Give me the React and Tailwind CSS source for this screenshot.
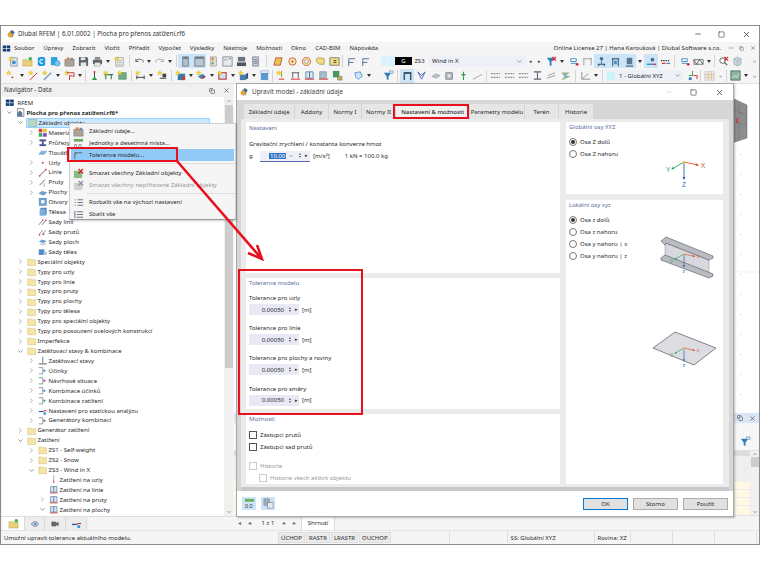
import { ChevronRight, ChevronDown, Minus, Square, X, Eye, Video, Copy } from 'lucide-react';

const star = <path d="M3 0.5l.8 1.7 1.8.2-1.3 1.2.4 1.8L3 4.5l-1.7.9.4-1.8L.4 2.4l1.8-.2z" fill="#f4d83a" stroke="#c9a21a" strokeWidth=".3" />;
const dot = (x, y, c = '#d8232a') => <circle cx={x} cy={y} r="1" fill={c} />;

const icons = {
  docstar: <><rect x="3" y="2" width="7" height="9" fill="#dfe7ee" stroke="#6b7a88" strokeWidth=".7" /><circle cx="6.5" cy="7" r="2" fill="#3d8fc4" />{star}</>,
  folderstar: <><path d="M1 4h4l1 1h5v6H1z" fill="#e8cf7c" stroke="#b99b45" strokeWidth=".5" /><circle cx="9" cy="3" r="2" fill="#4caf50" /></>,
  c: <><rect x="2" y="1" width="8" height="10" rx="2" fill="#1e9be0" /><path d="M7.5 4.5a2 2 0 1 0 0 3" stroke="#fff" fill="none" strokeWidth="1.1" /></>,
  cloud: <><rect x="1" y="1" width="7" height="9" rx="1" fill="#2ea3e3" /><circle cx="8" cy="8" r="3" fill="#7cc7ee" stroke="#2579ad" strokeWidth=".5" /></>,
  box: <><rect x="1" y="4" width="10" height="7" fill="#a9a39a" stroke="#6f6a63" strokeWidth=".5" /><rect x="3" y="1.5" width="3" height="3" fill="#d8823c" /><rect x="7" y="2" width="3" height="2.5" fill="#6f8fb0" /></>,
  save: <><path d="M1 1h8.5L11 2.5V11H1z" fill="#5f6468" /><rect x="3" y="1.5" width="5" height="3" fill="#e6e6e6" /><rect x="3" y="7" width="6" height="4" fill="#e6e6e6" /></>,
  print: <><rect x="3" y="1" width="6" height="3" fill="#8e9296" /><rect x="1" y="4" width="10" height="5" rx="1" fill="#5f6468" /><rect x="3" y="7" width="6" height="4" fill="#e9e9e9" stroke="#666" strokeWidth=".4" /></>,
  clip: <><rect x="2" y="2" width="8" height="9" fill="#eee" stroke="#777" strokeWidth=".6" /><path d="M3.5 5h5M3.5 7h5M3.5 9h5" stroke="#888" strokeWidth=".5" />{star}</>,
  undo: <path d="M2 6a4 3 0 0 1 8 1M2 3v3h3" fill="none" stroke="#666" strokeWidth="1" />,
  redo: <path d="M10 6a4 3 0 0 0-8 1M10 3v3H7" fill="none" stroke="#aaa" strokeWidth="1" />,
  panel: <><rect x="3" y="1" width="6" height="10" fill="#b7c0c8" stroke="#5a6570" strokeWidth=".8" /><rect x="3.5" y="1.5" width="5" height="1.5" fill="#5a6570" /></>,
  panel2: <><rect x="1" y="1" width="10" height="10" fill="#c0c8cf" stroke="#5a6570" strokeWidth=".8" /><rect x="1.5" y="1.5" width="9" height="1.5" fill="#5a6570" /></>,
  colors: <><rect x="3" y="1" width="6" height="10" fill="#ddd" stroke="#777" strokeWidth=".5" /><rect x="4" y="2" width="2" height="2" fill="#e0503c" /><rect x="4" y="4.5" width="2" height="2" fill="#e6c13c" /><rect x="4" y="7" width="2" height="2" fill="#47a05a" /></>,
  img: <><rect x="1" y="1" width="10" height="10" fill="#e7eaee" stroke="#5a6570" strokeWidth=".7" /><path d="M2 5l2-1.5L6 5M7 3h3" stroke="#556" strokeWidth=".6" fill="none" /></>,
  hbd: <><rect x="2" y="1" width="8" height="5" fill="#6a7480" /><rect x="1" y="7" width="10" height="4" fill="#4e5761" /></>,
  phone: <><rect x="3" y="1" width="6" height="10" fill="#c7d0d8" stroke="#5a6570" strokeWidth=".7" /><path d="M4 4h4M4 6h4M4 8h4" stroke="#445" strokeWidth=".6" /></>,
  para: <path d="M3 2h7L8 10H1z" fill="#e8c24a" stroke="#c0392b" strokeWidth=".8" />,
  search: <><circle cx="6" cy="6" r="4" fill="#f4e6a8" stroke="#d0503c" strokeWidth=".9" />{dot(6, 6)}</>,
  target: <><circle cx="6" cy="6" r="4.5" fill="#f2dc96" stroke="#c84a3a" strokeWidth=".8" /><circle cx="6" cy="6" r="2" fill="#fff" stroke="#777" strokeWidth=".6" /></>,
  bubble: <path d="M1.5 3.5Q2 1.5 6 2l4 1v6H5L1.5 6z" fill="#f3de7c" stroke="#7b6f3a" strokeWidth=".6" />,
  grid: <><rect x="1" y="2" width="10" height="8" fill="#f1dd83" stroke="#55534a" strokeWidth=".7" /><path d="M5 5h3M5 7h3" stroke="#333" strokeWidth="1" /></>,
  axis: <path d="M3 11V3h7M3 7h5" fill="none" stroke="#4a6c8c" strokeWidth="1" />,
  filterx: <><path d="M1 2h8L6 6v5L4 10V6z" fill="#2a7fc0" /><path d="M7 1l4 4M11 1L7 5" stroke="#d81e28" strokeWidth="1.3" /></>,
  filter: <><path d="M1 3h8L6 7v4L4 10V7z" fill="#2a7fc0" /><rect x="7" y="1" width="4" height="3" fill="#cfe2f2" stroke="#47739a" strokeWidth=".5" /></>,
  rig: <path d="M2 2v8M10 2v8M2 3h8" stroke="#999" strokeWidth="1" fill="none" />,
  loadA: <><circle cx="6" cy="3" r="2" fill="#4a6c8c" /><path d="M2 9h8M3 9v2M9 9v2" stroke="#263d52" strokeWidth="1" /><path d="M6 5v4" stroke="#2a7fc0" strokeWidth="1" /></>,
  loadB: <><path d="M2 3h8M3 3v8M9 3v8" stroke="#263d52" strokeWidth="1" /><rect x="4.5" y="5" width="3" height="4" fill="#4a8fc0" /></>,
  loadC: <><rect x="3" y="2" width="6" height="7" fill="#5b7a92" /><path d="M2 11h8" stroke="#263d52" strokeWidth="1" /></>,
  loadD: <><circle cx="7" cy="4" r="2" fill="#4a6c8c" /><path d="M1 9h7" stroke="#2a7fc0" strokeWidth="1.4" /><path d="M8 9h3" stroke="#d81e28" strokeWidth="1.4" /></>,
  loadE: <><path d="M1 5h10" stroke="#333" strokeWidth="1.2" strokeDasharray="1.5 1" /><path d="M2 8h4" stroke="#d81e28" strokeWidth="1.2" /><path d="M7 8h4" stroke="#2a7fc0" strokeWidth="1.2" /></>,
  net: <><path d="M3 3h6v3H3zM3 8h6" fill="#fff" stroke="#2a7fc0" strokeWidth=".9" /><circle cx="10" cy="9" r="1.5" fill="#d8232a" /></>,
  truss: <path d="M1 4h10v5H1zM1 4l3 5 3-5 4 5" fill="none" stroke="#333" strokeWidth=".7" />,
  magx: <><circle cx="5" cy="5" r="3" fill="#fff" stroke="#555" strokeWidth="1" /><path d="M7 7l3 3" stroke="#555" strokeWidth="1.2" /><path d="M7 1l4 4M11 1L7 5" stroke="#d81e28" strokeWidth="1.2" /></>,
  cube: <><path d="M2 3l4-2 4 2v6l-4 2-4-2z" fill="#c5d3df" stroke="#8fa2b2" strokeWidth=".6" /><path d="M6 5v6M2 3l4 2 4-2" stroke="#8fa2b2" strokeWidth=".5" fill="none" /></>,
  nodestar: <>{star}{dot(7, 8)}</>,
  linestar: <>{star}<path d="M2 11L10 3" stroke="#d8232a" strokeWidth="1" /></>,
  memberstar: <>{star}<path d="M2 11L10 3" stroke="#7aa0c4" strokeWidth="1.6" /></>,
  polystar: <>{star}<path d="M3 3h8v4L6 6v5" fill="none" stroke="#c83030" strokeWidth="1" /></>,
  sup1: <><path d="M6 2v6" stroke="#333" strokeWidth="1" /><path d="M3 11l3-4 3 4z" fill="#2e9e4a" />{dot(6, 2)}</>,
  sup2: <><path d="M1 5h10M3 5v5M9 5v5" stroke="#2e7a4a" strokeWidth="1.2" />{star}</>,
  sup3: <><rect x="2" y="3" width="8" height="7" fill="#6eae88" stroke="#3a7a58" strokeWidth=".6" />{star}</>,
  hinge: <><path d="M2 6v4M10 6v4M2 8h8" stroke="#333" strokeWidth="1" />{star}</>,
  hinge2: <><path d="M3 9h7" stroke="#333" strokeWidth="1" /><rect x="6" y="4" width="4" height="4" fill="#444" />{star}</>,
  surf: <><rect x="3" y="4" width="8" height="7" fill="#2c7fb8" /><rect x="7" y="7" width="4" height="4" fill="#c04040" />{star}</>,
  surf2: <><path d="M2 7l5-3 4 3-5 3z" fill="#3c87bd" /><circle cx="8" cy="8" r="1.4" fill="#d8232a" />{star}</>,
  frame: <><rect x="2" y="3" width="8" height="7" fill="#cfe3f3" stroke="#c02828" strokeWidth="1.1" />{star}</>,
  solidm: <><path d="M2 5h6v6H2z" fill="#497fb0" /><path d="M8 5l3-2v6l-3 2z" fill="#2c5a86" />{star}</>,
  book: <><rect x="2" y="3" width="8" height="8" fill="#5b9ad0" /><rect x="2" y="1" width="8" height="2.4" fill="#eef" stroke="#47739a" strokeWidth=".4" /></>,
  pin: <><path d="M6 1v7" stroke="#c4a31c" strokeWidth="1.2" /><path d="M3 10h6" stroke="#d8232a" strokeWidth="1" />{star}</>,
  load1: <><path d="M2 3h8M3 3v6M9 3v6" stroke="#333" strokeWidth=".8" /><path d="M1 10h10" stroke="#d8232a" strokeWidth="1" /></>,
  load2: <><path d="M2 2h8v7H2z" fill="#dbe8f4" stroke="#47739a" strokeWidth=".8" /><path d="M6 2v7" stroke="#47739a" /><path d="M1 10h10" stroke="#d8232a" strokeWidth="1" /></>,
  load3: <><rect x="2" y="2" width="7" height="7" fill="#a7bccd" stroke="#5e7688" strokeWidth=".6" /><path d="M1 10h10" stroke="#d8232a" strokeWidth="1" /></>,
  zs: <><rect x="1" y="1" width="7" height="7" fill="#4a9660" /><path d="M6 7h5v4H6z" fill="#c7b25a" stroke="#444" strokeWidth=".4" /></>,
  sketch: <path d="M2 3l6-1 2 5-4 3-3-2z" fill="#cfe3f7" stroke="#3f87c9" strokeWidth=".8" />,
  frameactive: <path d="M2.5 11V3h7v8M2.5 3.5h7" fill="none" stroke="#445566" strokeWidth="1.6" />,
  bowl: <path d="M2 2l4 8 4-8M2 2l4 4 4-4" fill="none" stroke="#4a63c8" strokeWidth="1" />,
  plate: <path d="M2 7l4-3 5 2-4 3z" fill="#bcc3ca" stroke="#7a848c" strokeWidth=".5" />,
  cubeg: <><rect x="2" y="3" width="7" height="7" fill="#b7bdc2" stroke="#5e666c" strokeWidth=".7" /><circle cx="5.5" cy="6.5" r="1.5" fill="#eee" /></>,
  arrows: <path d="M6 2v4l-2-1h4L6 6M6 11V7" stroke="#2e9e4a" strokeWidth="1.2" fill="none" />,
  thin: <path d="M1 10L11 5" stroke="#bbb" strokeWidth="1.2" />,
  dash: <path d="M1 4h10M1 8h10" stroke="#667" strokeWidth="1" strokeDasharray="2 1" />,
  ibeam: <path d="M2 2h8M2 10h8M6 2v8" stroke="#667" strokeWidth="1.2" />,
  slash: <path d="M1 9l9-3M2 6l8-3" stroke="#8a8f94" strokeWidth=".9" />,
  lightning: <path d="M2 3h8l-4 3 5 1-9 4 3-4z" fill="#6ab0e0" stroke="#d6b522" strokeWidth=".5" />,
  corner: <path d="M2 2v8h9M2 10l7-6" stroke="#8a8f94" strokeWidth="1" fill="none" />,
  tri: <><path d="M6 1v5H2" stroke="#2e9e4a" strokeWidth="1" fill="none" /><path d="M7 6h4v4" stroke="#d8232a" strokeWidth="1" fill="none" /><rect x="2" y="8" width="3" height="3" fill="#2a7fc0" /></>,
  table: <><rect x="1" y="2" width="10" height="9" fill="#eee" stroke="#aaa" strokeWidth=".5" /><path d="M1 5h10M1 8h10M4.5 2v9M8 2v9" stroke="#d6a86a" strokeWidth=".6" /></>,
  chart: <><rect x="1" y="1" width="10" height="10" fill="#8bb89a" stroke="#46606e" strokeWidth=".9" /><path d="M2 9l3-3 2 2 3-4" stroke="#fff" fill="none" strokeWidth=".7" /></>,
  mat: <><rect x="1" y="1" width="4.5" height="4.5" fill="#e04040" /><rect x="6.5" y="1" width="4.5" height="4.5" fill="#eac02e" /><rect x="1" y="6.5" width="4.5" height="4.5" fill="#39a85a" /><rect x="6.5" y="6.5" width="4.5" height="4.5" fill="#8044c0" /></>,
  section: <path d="M2 2h8v2H7v4h3v2H2V8h3V4H2z" fill="#2464b4" stroke="#d8232a" strokeWidth=".3" />,
  thick: <path d="M1 8l3-4h7L8 8z" fill="#7fb3e0" stroke="#5d8db8" strokeWidth=".5" />,
  node: <rect x="5" y="5" width="2" height="2" fill="#d8232a" />,
  line: <><path d="M2 10l8-8" stroke="#444" strokeWidth="1" />{dot(2, 10)}{dot(10, 2)}</>,
  member: <><path d="M2 9l7-7" stroke="#444" strokeWidth="1" /><text x="7" y="11" fontSize="6" fontFamily="Liberation Sans" fill="#444">I</text></>,
  surface: <path d="M1 7l4-3 6 2-4 3z" fill="#6f9fcc" stroke="#4a78a5" strokeWidth=".5" />,
  opening: <><rect x="1.5" y="1.5" width="9" height="9" fill="#6fa2d4" stroke="#446f9c" strokeWidth=".6" /><rect x="4" y="4" width="4" height="4" fill="#fff" /></>,
  solid: <><rect x="2" y="3" width="7" height="8" fill="#79aee0" /><path d="M2 3l2-2h7l-2 2zM9 3l2-2v8l-2 2z" fill="#4f8ac4" /></>,
  setline: <><path d="M1 10l5-6M5 10l5-6" stroke="#444" strokeWidth=".8" />{dot(6, 4)}{dot(10, 4)}</>,
  setmember: <><path d="M1 10l5-6M5 10l5-6" stroke="#555" strokeWidth=".8" />{dot(2, 10)}{dot(7, 9)}</>,
  setsurf: <><path d="M1 6l4-3 6 2-4 3z" fill="#6f9fcc" /><path d="M3 9h7" stroke="#999" /></>,
  setsolid: <><rect x="1" y="3" width="7" height="7" fill="#4f8ac4" /><rect x="7" y="6" width="4" height="4" fill="#a7c6e4" /></>,
  ls: <><path d="M6 1v8" stroke="#2d6bb3" strokeWidth="1" /><path d="M1 10h10" stroke="#333" strokeWidth="1" /></>,
  effect: <><path d="M1 2h5M1 10h5M6 2v8" stroke="#555" strokeWidth=".7" fill="none" /><path d="M7 4l3 2-3 2z" fill="#2a7fd8" /></>,
  design: <><path d="M1 2h5M1 10h5" stroke="#2e9e4a" strokeWidth=".9" fill="none" /><path d="M6 2v8" stroke="#555" strokeWidth=".7" /><path d="M7 4l3 2-3 2z" fill="#d020c0" /></>,
  combogreen: <><path d="M1 2h5M1 10h5M6 2v8" stroke="#555" strokeWidth=".7" fill="none" /><path d="M7 4l3 2-3 2z" fill="#1ea04a" /></>,
  static: <><path d="M1 7h6" stroke="#2a5f9e" strokeWidth="1.5" /><path d="M7 6h4" stroke="#d8232a" strokeWidth="1.2" /><rect x="7" y="8" width="3" height="3" fill="#3d8fd0" /></>,
  gen: <><path d="M1 2h5M1 10h5M6 2v8" stroke="#555" strokeWidth=".7" fill="none" /><path d="M7 4l3 2-3 2z" fill="#666" /></>,
  ln: <><path d="M6 1v7" stroke="#3d6ab0" strokeWidth="1" strokeDasharray="1.5 .7" /><path d="M6 7v3" stroke="#d8232a" strokeWidth="1.2" /></>,
  folder: <path d="M1 2.5h4l1 1h5v7.5H1z" fill="#f5e6a8" stroke="#cdb874" strokeWidth=".6" />,
  folderg: <rect x="1" y="2" width="10" height="9" fill="#b9d6c4" stroke="#86a896" strokeWidth=".6" />,
  project: <><rect x="2" y="1" width="8" height="10" fill="#fff" stroke="#445" strokeWidth=".7" /><path d="M1 7l4-4 3 3v4H2z" fill="#5b7c9a" /></>,
  flag: <><rect x="1" y="2" width="10" height="8" fill="#163a78" /><path d="M1 6h10M6 2v8" stroke="#fff" strokeWidth=".8" /></>,
  logo: <><path d="M2 6l5-5 3 3-2 6H4z" fill="#7a7f86" /><circle cx="5" cy="7" r="3" fill="#e7a63a" /><circle cx="8" cy="4" r="2" fill="#3e6ea8" /></>,
  units: <><rect x="1" y="1" width="10" height="3" fill="#6aae5a" /><text x="1" y="10.5" fontSize="6" fontFamily="Liberation Sans" fill="#333">0.0</text></>,
  tol: <path d="M2 10V3h8M4 3l-2 2" stroke="#555" strokeWidth=".9" fill="none" />,
  delx: <><rect x="1" y="3" width="9" height="8" fill="#86bf7c" /><path d="M6 1l5 5M11 1L6 6" stroke="#d81e28" strokeWidth="1.4" /></>,
  delg: <><rect x="1" y="3" width="9" height="8" fill="#ccd2cc" /><path d="M6 1l5 5M11 1L6 6" stroke="#8b9097" strokeWidth="1.4" /></>,
  expand: <path d="M2 3h1M5 3h6M2 6h1M5 6h6M2 9h1M5 9h6" stroke="#667" strokeWidth="1" />,
  collapse: <path d="M2 2v8M4 3h7M4 6h7M4 9h7" stroke="#667" strokeWidth="1" />,
  copy: <><rect x="1" y="1" width="6" height="7" fill="#9fb0bd" stroke="#667" strokeWidth=".5" /><rect x="5" y="5" width="6" height="6" fill="#e6e9ec" stroke="#667" strokeWidth=".5" /></>,
};

const Ico = ({ k, className = 'w-[11px] h-[11px]' }) => (
  <svg viewBox="0 0 12 12" className={`shrink-0 ${className}`}>{icons[k]}</svg>
);

const Slot = ({ k, active }) => (
  <div className={`w-[14px] h-[14px] flex items-center justify-center shrink-0 ${active ? 'bg-[#cce4f7]' : ''}`}>
    <Ico k={k} />
  </div>
);
const Caret = ({ w = 'w-[8px]' }) => (
  <div className={`${w} h-[14px] flex items-center justify-center shrink-0`}>
    <div className="border-x-[2px] border-t-[3px] border-x-transparent border-t-[#333]" />
  </div>
);
const Sep = ({ w = 'w-[7px]' }) => (
  <div className={`${w} h-[12px] flex justify-center shrink-0`}><div className="w-px h-full bg-[#d4d4d4]" /></div>
);
const More = () => <div className="w-[9px] text-center text-[6px] text-[#888] shrink-0">»</div>;

function Toolbar1() {
  return (
    <div className="h-[14px] flex items-center pl-[5px] bg-[#f5f5f5] shrink-0">
      {['docstar', 'folderstar', 'c', 'cloud', 'box', 'save', 'print'].map((k) => <Slot key={k} k={k} />)}
      <Caret />
      <Slot k="clip" />
      <Sep w="w-[6px]" />
      <Slot k="undo" /><Caret w="w-[6px]" /><Slot k="redo" /><Caret />
      <Sep w="w-[4px]" />
      <Slot k="panel" active /><Slot k="panel2" active />
      {['colors', 'img', 'hbd', 'phone'].map((k) => <Slot key={k} k={k} />)}
      <Sep w="w-[9px]" />
      {['para', 'search', 'target', 'bubble', 'grid'].map((k) => <Slot key={k} k={k} />)}
      <Sep w="w-[3px]" />
      <Slot k="axis" /><Slot k="axis" />
      <div className="w-[6px] h-[10px] ml-[9px] bg-[#d8f3fb]" />
      <div className="w-[6px] h-[10px] ml-px bg-[#d8f3fb]" />
      <div className="w-[17px] h-[8px] ml-[1px] bg-black text-white text-[6px] leading-[8px] text-center">G</div>
      <div className="w-[15px] text-center">ZS3</div>
      <div className="w-[97px] h-[11px] ml-[2px] bg-[#eef0f8] flex items-center justify-between px-[3px]">
        <span>Wind in X</span>
        <ChevronDown size={7} color="#666" />
      </div>
      <div className="w-[9px] text-center text-[5px]">◂</div>
      <div className="w-[9px] text-center text-[5px]">▸</div>
      <Slot k="filterx" /><Caret />
      <Slot k="net" /><Slot k="rig" />
      <Slot k="loadA" active /><Slot k="loadB" active /><Slot k="loadC" active />
      <Caret />
      <Slot k="loadD" active /><Slot k="loadE" />
      <Sep w="w-[5px]" />
      <Slot k="net" /><Slot k="truss" /><Caret />
      <Sep w="w-[3px]" />
      <Slot k="magx" /><Slot k="cube" />
      <div className="flex-1" />
      <More />
    </div>
  );
}

function Toolbar2() {
  return (
    <div className="h-[16px] flex items-center pl-[3px] bg-[#f5f5f5] border-b border-[#e0e0e0] shrink-0">
      <Slot k="nodestar" /><Caret />
      <Slot k="linestar" />
      <Slot k="memberstar" /><Caret />
      <Slot k="polystar" /><Caret />
      <Sep w="w-[3px]" />
      <Slot k="sup1" /><Slot k="sup2" /><Slot k="sup3" />
      <Sep w="w-[4px]" />
      <Slot k="hinge" /><Caret /><Slot k="hinge2" />
      <Sep w="w-[4px]" />
      <Slot k="surf" /><Caret w="w-[7px]" /><Slot k="surf2" /><Caret w="w-[7px]" /><Slot k="frame" /><Caret w="w-[7px]" /><Slot k="solidm" /><Caret w="w-[7px]" /><Slot k="book" />
      <Sep w="w-[3px]" />
      {['pin', 'load1', 'load2', 'load3', 'zs'].map((k) => <Slot key={k} k={k} />)}
      <div className="w-[7px]" />
      <Slot k="sketch" /><Caret />
      <div className="w-[8px]" />
      <Slot k="filter" />
      <Sep w="w-[5px]" />
      <Slot k="frameactive" active />
      <Slot k="bowl" /><Slot k="plate" /><Slot k="cubeg" /><Slot k="arrows" /><Slot k="thin" />
      <Sep w="w-[4px]" />
      <Slot k="dash" /><Slot k="dash" /><Slot k="dash" /><Slot k="ibeam" /><Slot k="slash" /><Slot k="lightning" />
      <Sep w="w-[6px]" />
      <Slot k="corner" /><Caret />
      <Sep w="w-[5px]" />
      <div className="w-[78px] h-[11px] bg-[#eef0f8] flex items-center px-[2px] gap-[4px]">
        <div className="w-[8px] h-[8px] bg-[#cdf3f7]" />
        <span className="flex-1">1 - Globální XYZ</span>
        <ChevronDown size={7} color="#666" />
      </div>
      <div className="w-[2px]" />
      <Slot k="tri" />
      <Sep w="w-[3px]" />
      <Slot k="table" />
      <More />
      <Sep w="w-[3px]" />
      <Slot k="chart" /><Caret />
      <More />
    </div>
  );
}

const tree = [
  [0, 'project', 'Plocha pro přenos zatížení.rf6*', 'open', 'bold'],
  [1, 'folderg', 'Základní objekty', 'open', 'sel'],
  [2, 'mat', 'Materiály', 'closed'],
  [2, 'section', 'Průřezy', 'closed'],
  [2, 'thick', 'Tloušťky'],
  [2, 'node', 'Uzly', 'closed'],
  [2, 'line', 'Linie', 'closed'],
  [2, 'member', 'Pruty', 'closed'],
  [2, 'surface', 'Plochy', 'closed'],
  [2, 'opening', 'Otvory'],
  [2, 'solid', 'Tělesa'],
  [2, 'setline', 'Sady linií'],
  [2, 'setmember', 'Sady prutů'],
  [2, 'setsurf', 'Sady ploch'],
  [2, 'setsolid', 'Sady těles'],
  [1, 'folder', 'Speciální objekty', 'closed'],
  [1, 'folder', 'Typy pro uzly', 'closed'],
  [1, 'folder', 'Typy pro linie', 'closed'],
  [1, 'folder', 'Typy pro pruty', 'closed'],
  [1, 'folder', 'Typy pro plochy', 'closed'],
  [1, 'folder', 'Typy pro tělesa', 'closed'],
  [1, 'folder', 'Typy pro speciální objekty', 'closed'],
  [1, 'folder', 'Typy pro posouzení ocelových konstrukcí', 'closed'],
  [1, 'folder', 'Imperfekce', 'closed'],
  [1, 'folder', 'Zatěžovací stavy & kombinace', 'open'],
  [2, 'ls', 'Zatěžovací stavy', 'closed'],
  [2, 'effect', 'Účinky', 'closed'],
  [2, 'design', 'Návrhové situace', 'closed'],
  [2, 'effect', 'Kombinace účinků', 'closed'],
  [2, 'combogreen', 'Kombinace zatížení', 'closed'],
  [2, 'static', 'Nastavení pro statickou analýzu', 'closed'],
  [2, 'gen', 'Generátory kombinací', 'closed'],
  [1, 'folder', 'Generátor zatížení', 'closed'],
  [1, 'folder', 'Zatížení', 'open'],
  [2, 'folder', 'ZS1 - Self-weight', 'closed'],
  [2, 'folder', 'ZS2 - Snow', 'closed'],
  [2, 'folder', 'ZS3 - Wind in X', 'open'],
  [3, 'ln', 'Zatížení na uzly'],
  [3, 'load2', 'Zatížení na linie'],
  [3, 'load2', 'Zatížení na pruty', 'closed'],
  [3, 'load2', 'Zatížení na plochy', 'open'],
];
const indent = ['pl-[2px]', 'pl-[13px]', 'pl-[24px]', 'pl-[35px]'];

function TreeRow({ level, icon, label, state, mod }) {
  return (
    <div className={`h-[9.93px] flex items-center shrink-0 ${indent[level]}`}>
      <div className="w-[10px] flex justify-center shrink-0">
        {state === 'open' && <ChevronDown size={7} color="#444" />}
        {state === 'closed' && <ChevronRight size={7} color="#777" />}
      </div>
      <div className={`flex items-center h-[10px] ${mod === 'sel' ? 'bg-[#cce8ff] w-[184px] ml-px border border-[#99d1ff]' : ''}`}>
        <div className={`w-[11px] flex justify-center shrink-0 ${mod === 'sel' ? '' : 'ml-px'}`}><Ico k={icon} className="w-[9.5px] h-[9.5px]" /></div>
        <span className={`ml-[0.5px] whitespace-nowrap ${mod === 'bold' ? 'font-bold' : ''}`}>{label}</span>
      </div>
    </div>
  );
}

function Navigator() {
  return (
    <div className="w-[233px] flex flex-col bg-[#f5f5f5] shrink-0">
      <div className="h-[13px] flex items-center px-[3px] shrink-0 text-[#333] bg-[#f0f0f0]">
        <span className="flex-1 text-[6.2px]">Navigátor - Data</span>
        <Copy size={6} color="#333" className="mr-[8px]" />
        <X size={7} color="#333" className="mr-[1px]" />
      </div>
      <div className="flex-1 flex bg-white overflow-hidden mx-px">
        <div className="flex-1 pt-px overflow-hidden">
          <div className="h-[9.93px] flex items-center pl-[3px]">
            <Ico k="flag" className="w-[9.5px] h-[9.5px]" />
            <span className="ml-[3px]">RFEM</span>
          </div>
          {tree.map(([level, icon, label, state, mod]) => (
            <TreeRow key={label + icon} level={level} icon={icon} label={label} state={state} mod={mod} />
          ))}
        </div>
        <div className="w-[9px] bg-[#f0f0f0] flex flex-col items-center shrink-0">
          <ChevronDown size={6} color="#555" className="rotate-180 my-[1px]" />
          <div className="w-[8px] h-[263px] bg-[#cdcdcd]" />
          <div className="flex-1" />
          <ChevronDown size={6} color="#555" className="my-[1px]" />
        </div>
      </div>
      <div className="h-[14px] flex bg-[#f5f5f5] shrink-0 border-t border-[#ddd] pl-[2px]">
        <div className="w-[21px] flex justify-center items-center bg-white"><Ico k="folderstar" /></div>
        <div className="w-[21px] flex justify-center items-center bg-[#ededed] border-x border-[#d8d8d8]"><Eye size={8} color="#2d5c8c" /></div>
        <div className="w-[21px] flex justify-center items-center bg-[#ededed] border-r border-[#d8d8d8]"><Video size={8} color="#666" fill="#666" /></div>
        <div className="w-[21px] flex justify-center items-center bg-[#ededed] border-r border-[#d8d8d8]"><Ico k="static" /></div>
      </div>
    </div>
  );
}

function Workspace() {
  const gridDots = [0, 1, 2, 3, 4, 5, 6, 7, 8, 9, 10, 11, 12, 13, 14];
  return (
    <div className="flex-1 flex flex-col min-w-0">
      <div className="flex-1 bg-white relative overflow-hidden">
        <svg viewBox="0 0 27 331" className="absolute right-0 top-0 w-[27px] h-[331px]">
          <path d="M0 14L15 21V54L0 59z" fill="#8d8d8d" stroke="#666" strokeWidth=".5" />
          <path d="M0 26L15 31M0 38L15 41M7 18V56" stroke="#6e6e6e" strokeWidth=".5" />
          <rect x="4" y="34" width="2" height="5" fill="#c8484a" />
          <path d="M0 188H27" stroke="#cdf3f3" strokeWidth=".6" />
          {gridDots.map((d) => <rect key={d} x="8" y={70 + d * 20} width="1" height="1" fill="#ccc" />)}
        </svg>
      </div>
      <div className="h-[10px] bg-[#dbe6f4] flex items-center justify-end gap-[6px] pr-[3px] shrink-0">
        <Copy size={6} color="#333" />
        <X size={7} color="#333" />
      </div>
      <div className="h-[27px] flex items-end pb-[3px] justify-end pr-[8px] bg-[#f7f7f7] shrink-0"><Ico k="filter" /></div>
      <div className="h-[66px] flex shrink-0 border-y border-[#e0e0e0]">
        <div className="flex-1 flex flex-col">
          <div className="h-[5px] bg-[#dcdcdc]" />
          <div className="h-[26px] bg-[#efefef]" />
          {[0, 1, 2].map((i) => <div key={i} className="h-[8px] bg-[#fff8e4] border-b border-[#ececec]" />)}
          <div className="flex-1 bg-[#fff8e4] pl-[35px] leading-[6px] whitespace-nowrap overflow-hidden">Součet zatížení ve směru Y</div>
        </div>
        <div className="w-[9px] bg-[#f0f0f0] flex flex-col items-center">
          <ChevronDown size={6} color="#555" className="rotate-180" />
          <div className="w-[8px] h-[10px] bg-[#cdcdcd]" />
          <div className="flex-1" />
          <ChevronDown size={6} color="#555" />
        </div>
      </div>
      <div className="h-[14px] flex items-center bg-[#f5f5f5] shrink-0 pl-[4px]">
        <span className="text-[6px] text-[#666] w-[10px]">◂</span>
        <span className="text-[6px] text-[#666] w-[10px]">◂</span>
        <span className="w-[20px] text-center">1 z 1</span>
        <span className="text-[6px] text-[#666] w-[10px] ml-[5px]">▸</span>
        <span className="text-[6px] text-[#666] w-[8px]">▸</span>
        <div className="h-full w-[34px] bg-white border-x border-[#ddd] flex items-center justify-center">Shrnutí</div>
      </div>
    </div>
  );
}

function StatusBar() {
  return (
    <div className="h-[14px] flex items-stretch bg-[#f5f5f5] border-t border-[#e4e4e4] shrink-0">
      <div className="w-[277px] pl-[3px] flex items-center">Umožní upravit tolerance aktuálního modelu.</div>
      {['ÚCHOP', 'RASTR', 'LRASTR', 'OUCHOP'].map((s) => (
        <div key={s} className="px-[2px] my-[1px] mr-px bg-[#ebebeb] border border-[#ddd] flex items-center">{s}</div>
      ))}
      <div className="w-[58px] border-r border-[#ddd] my-[1px]" />
      <div className="w-[58px] border-r border-[#ddd] my-[1px]" />
      <div className="w-[87px] pl-[3px] border-r border-[#ddd] my-[1px] flex items-center whitespace-nowrap">SS: Globální XYZ</div>
      <div className="w-[36px] pl-[3px] border-r border-[#ddd] my-[1px] flex items-center whitespace-nowrap">Rovina: XZ</div>
      <div className="w-[42px] border-r border-[#ddd] my-[1px]" />
      <div className="w-[42px] border-r border-[#ddd] my-[1px]" />
      <div className="w-[42px] border-r border-[#ddd] my-[1px]" />
    </div>
  );
}

const titleColor = 'text-[#5b6c9c]';

const Radio = ({ on, label }) => (
  <div className="h-[12px] flex items-center">
    <div className="w-[8px] h-[8px] rounded-full border border-[#777] flex items-center justify-center mr-[3px] shrink-0">
      {on && <div className="w-[4px] h-[4px] rounded-full bg-[#333]" />}
    </div>
    <span>{label}</span>
  </div>
);

const Check = ({ label, off }) => (
  <div className={`h-[12px] flex items-center ${off ? 'text-[#999]' : ''}`}>
    <div className={`w-[8px] h-[8px] border mr-[3px] shrink-0 ${off ? 'border-[#ccc]' : 'border-[#555]'}`} />
    <span>{label}</span>
  </div>
);

const Spin = () => (
  <div className="flex flex-col items-center justify-center gap-[1px] w-[7px]">
    <div className="border-x-[1.5px] border-b-[2px] border-x-transparent border-b-[#555]" />
    <div className="border-x-[1.5px] border-t-[2px] border-x-transparent border-t-[#555]" />
  </div>
);

const TolField = ({ label }) => (
  <div className="h-[30.2px]">
    <div className="h-[10px] leading-[10px] ml-[3px]">{label}</div>
    <div className="flex items-center mt-[1px]">
      <div className="w-[50px] h-[11px] bg-[#e8e9f4] flex items-center justify-end ml-[3px]">
        <span>0.00050</span>
        <div className="ml-[2px]"><Spin /></div>
        <div className="w-[6px] text-center text-[5px]">▸</div>
      </div>
      <span className="ml-[3px]">[m]</span>
    </div>
  </div>
);

function Axes({ x, y, lower, small }) {
  const c = lower ? ['x', 'y', 'z'] : ['X', 'Y', 'Z'];
  const s = small ? 0.75 : 1;
  return (
    <g transform={`translate(${x} ${y}) scale(${s})`} fontFamily="Liberation Sans" fontSize="6.5">
      <path d="M0 0L14 3" stroke="#d8502c" strokeWidth=".9" /><path d="M15 3.5l-3-2.2-.4 2.8z" fill="#d8502c" />
      <path d="M0 0L-12 7" stroke="#28a060" strokeWidth=".9" /><path d="M-13 7.5l3.4-.4-1.4-2.4z" fill="#28a060" />
      <path d="M0 0V17" stroke="#2a5fc0" strokeWidth=".9" /><path d="M0 18l-1.5-3h3z" fill="#2a5fc0" />
      <circle r="1.2" fill="#f0d020" />
      <text x="17" y="5.5" fill="#d8502c">{c[0]}</text>
      <text x="-18" y="10" fill="#28a060">{c[1]}</text>
      <text x="-2" y="25" fill="#2a5fc0">{c[2]}</text>
    </g>
  );
}

function Dialog() {
  const tabs = [
    ['Základní údaje', 'w-[50px]'], ['Addony', 'w-[33px]'], ['Normy I', 'w-[32px]'], ['Normy II', 'w-[33px]'],
    ['Nastavení & možnosti', 'w-[73px]', true], ['Parametry modelu', 'w-[54px]'], ['Terén', 'w-[33px]'], ['Historie', 'w-[34px]'],
  ];
  return (
    <div className="absolute left-[236px] top-[83px] w-[498px] h-[434px] bg-white border border-[#a8a8a8] flex flex-col shadow-[1px_1px_2px_rgba(0,0,0,0.25)]">
      <div className="h-[16px] flex items-center pl-[2px] shrink-0 text-[#444] text-[6.4px]">
        <Ico k="logo" className="w-[10px] h-[10px]" />
        <span className="ml-[3px] flex-1">Upravit model - základní údaje</span>
        <Minus size={8} color="#c8c8c8" className="mr-[17px]" />
        <Square size={7} color="#333" className="mr-[18px]" />
        <X size={9} color="#333" className="mr-[9px]" />
      </div>
      <div className="flex-1 bg-[#d6d6d6] flex flex-col min-h-0">
        <div className="h-[19px] flex items-end pl-[7px] shrink-0 gap-px">
          {tabs.map(([t, w, active]) => (
            <div key={t} className={`${w} h-[15px] flex items-center justify-center whitespace-nowrap ${active ? 'bg-[#f0f0f0] font-medium' : 'bg-[#e6e6e6]'}`}>{t}</div>
          ))}
        </div>
        <div className="flex-1 mx-[4px] mb-[4px] p-[3px] pl-[5px] bg-[#ebebeb] flex gap-[6px] min-h-0">
          <div className="w-[314px] flex flex-col gap-[5px]">
            <div className="h-[151px] bg-white px-[3px] pt-[2px] shrink-0">
              <div className={`${titleColor} h-[9px] leading-[9px]`}>Nastavení</div>
              <div className="mt-[6px] h-[10px] leading-[10px]">Gravitační zrychlení / konstanta konverze hmot</div>
              <div className="flex items-center mt-[1.5px] h-[11px]">
                <span className="w-[11px]">g</span>
                <div className="w-[50px] h-[11px] bg-[#eef0f8] border-b border-[#5566b4] flex items-center">
                  <span className="ml-[9px] bg-[#3373c4] text-white px-px">10.00</span>
                  <ChevronDown size={6} color="#666" className="ml-[2px]" />
                  <div className="ml-[2px]"><Spin /></div>
                  <div className="w-[6px] text-center text-[5px]">▸</div>
                </div>
                <span className="ml-[3px]">[m/s²]</span>
                <span className="ml-[15px]">1 kN = 100.0 kg</span>
              </div>
            </div>
            <div className="h-[131px] bg-white shrink-0 pt-[1px]">
              <div className={`${titleColor} ml-[3px] h-[9px] leading-[9px]`}>Tolerance modelu</div>
              <div className="mt-[5px]">
                {['Tolerance pro uzly', 'Tolerance pro linie', 'Tolerance pro plochy a roviny', 'Tolerance pro směry'].map((t) => <TolField key={t} label={t} />)}
              </div>
            </div>
            <div className="flex-1 bg-white pl-[3px] pt-px">
              <div className={`${titleColor} h-[9px] leading-[9px]`}>Možnosti</div>
              <div className="mt-[5px]"><Check label="Zástupci prutů" /><Check label="Zástupci sad prutů" /></div>
              <div className="mt-[7px]"><Check label="Historie" off /></div>
              <div className="ml-[10px]"><Check label="Historie všech aktivit objektu" off /></div>
            </div>
          </div>
          <div className="w-[157px] flex flex-col gap-[6px]">
            <div className="h-[72px] bg-white relative shrink-0 pl-[3px] pt-px">
              <div className={`${titleColor} h-[9px] leading-[9px]`}>Globální osy XYZ</div>
              <div className="mt-[4px]"><Radio on label="Osa Z dolů" /><Radio label="Osa Z nahoru" /></div>
              <svg viewBox="0 0 157 72" className="absolute inset-0 w-full h-full"><Axes x={118} y={40} /></svg>
            </div>
            <div className="flex-1 bg-white relative pl-[3px] pt-px">
              <div className={`${titleColor} h-[9px] leading-[9px]`}>Lokální osy xyz</div>
              <div className="mt-[4px]">
                <Radio on label="Osa z dolů" /><Radio label="Osa z nahoru" /><Radio label="Osa y nahoru | x" /><Radio label="Osa y nahoru | z" />
              </div>
              <svg viewBox="0 0 157 284" className="absolute inset-0 w-full h-full">
                <path d="M99 43V59L143 76V60z" fill="#d7d8dd" stroke="#777" strokeWidth=".4" />
                <path d="M95 41L100 37L147 56L147 58L143 60L100 43L99 45z" fill="#b9bcc2" stroke="#555" strokeWidth=".6" />
                <path d="M95 58L99 55L147 74L147 76L143 78L95 60z" fill="#b9bcc2" stroke="#555" strokeWidth=".6" />
                <Axes x={118} y={54} lower small />
                <path d="M87 148L109 132L150 148L128 165z" fill="#dcdce2" stroke="#555" strokeWidth=".7" />
                <Axes x={118} y={148} lower small />
              </svg>
            </div>
          </div>
        </div>
        <div className="h-[4px] bg-[#c6c8cc] -mt-[4px] mx-[4px] shrink-0" />
      </div>
      <div className="h-[25px] flex items-center pl-[5px] pr-[5px] shrink-0 bg-white">
        <div className="w-[14px] h-[13px] bg-[#cce4f7] flex items-center justify-center"><Ico k="units" /></div>
        <div className="w-[14px] h-[13px] bg-[#cce4f7] flex items-center justify-center ml-[5px]"><Ico k="copy" /></div>
        <div className="flex-1" />
        <div className="w-[45px] h-[12px] bg-[#e1e1e1] border border-[#0078d7] flex items-center justify-center">OK</div>
        <div className="w-[45px] h-[12px] bg-[#e1e1e1] border border-[#adadad] flex items-center justify-center ml-[5px]">Storno</div>
        <div className="w-[45px] h-[12px] bg-[#e1e1e1] border border-[#adadad] flex items-center justify-center ml-[5px]">Použít</div>
      </div>
    </div>
  );
}

const MenuItem = ({ icon, label, active, off }) => (
  <div className={`h-[12px] flex items-center ${active ? 'bg-[#91c9f7] mx-px' : ''} ${off ? 'text-[#999]' : ''}`}>
    <div className={`w-[15px] flex justify-center shrink-0 ${active ? '' : 'ml-px'}`}><Ico k={icon} /></div>
    <span className="ml-[3px] whitespace-nowrap">{label}</span>
  </div>
);

function ContextMenu() {
  return (
    <div className="absolute left-[69px] top-[123px] w-[167px] h-[97px] bg-[#f5f5f5] border border-[#cfcfcf] border-b-[#999] pt-px shadow-[1px_1px_2px_rgba(0,0,0,0.2)]">
      <MenuItem icon="box" label="Základní údaje..." />
      <MenuItem icon="units" label="Jednotky a desetinná místa..." />
      <MenuItem icon="tol" label="Tolerance modelu..." active />
      <div className="h-[5px] flex items-center pl-[17px]"><div className="h-px w-full bg-[#ddd]" /></div>
      <div className="h-px" />
      <MenuItem icon="delx" label="Smazat všechny Základní objekty" />
      <MenuItem icon="delg" label="Smazat všechny nepřiřazené Základní objekty" off />
      <div className="h-[5px] flex items-center pl-[17px]"><div className="h-px w-full bg-[#ddd]" /></div>
      <MenuItem icon="expand" label="Rozbalit vše na výchozí nastavení" />
      <MenuItem icon="collapse" label="Sbalit vše" />
    </div>
  );
}

export default function App() {
  return (
    <div className="relative w-[760px] h-[570px] bg-white overflow-hidden text-[6px] leading-none text-[#2a2a2a] font-['Noto_Sans',sans-serif]">
      <div className="h-[25px]" />
      <div className="h-[520px] border border-[#8c8c8c] flex flex-col bg-[#f5f5f5]">
        <div className="h-[16px] flex items-center pl-[5px] bg-white shrink-0 text-[#333] text-[6.3px]">
          <Ico k="logo" className="w-[10px] h-[10px]" />
          <span className="ml-[2px] flex-1">Dlubal RFEM | 6.01.0002 | Plocha pro přenos zatížení.rf6</span>
          <Minus size={8} color="#333" className="mr-[16px]" />
          <Square size={7} color="#333" className="mr-[17px]" />
          <X size={9} color="#333" className="mr-[8px]" />
        </div>
        <div className="h-[12px] flex items-center pl-[1px] bg-[#f5f5f5] shrink-0">
          <Ico k="flag" className="w-[9px] h-[9px]" />
          <div className="flex gap-[9px] ml-[3px] flex-1">
            {['Soubor', 'Úpravy', 'Zobrazit', 'Vložit', 'Přiřadit', 'Výpočet', 'Výsledky', 'Nástroje', 'Možnosti', 'Okno', 'CAD-BIM', 'Nápověda'].map((m) => <span key={m}>{m}</span>)}
          </div>
          <span className="mr-[7px]">Online License 27 | Hana Karoušová | Dlubal Software s.r.o.</span>
          <Minus size={6} color="#555" className="mr-[5px]" />
          <Copy size={5} color="#555" className="mr-[6px]" />
          <X size={6} color="#555" className="mr-[3px]" />
        </div>
        <Toolbar1 />
        <Toolbar2 />
        <div className="flex-1 flex min-h-0">
          <Navigator />
          <Workspace />
        </div>
        <StatusBar />
      </div>

      <Dialog />
      <ContextMenu />

      <div className="absolute left-[393px] top-[104px] w-[76px] h-[15px] border-[2.5px] border-[#e8101e]" />
      <div className="absolute left-[67px] top-[147px] w-[111px] h-[15px] border-[2.5px] border-[#e8101e]" />
      <div className="absolute left-[238px] top-[269px] w-[125px] h-[146px] border-[2.5px] border-[#e8101e]" />
      <svg viewBox="0 0 760 570" className="absolute inset-0 w-[760px] h-[570px] pointer-events-none">
        <path d="M177 161L261 258M257 245L262 259L248 253" fill="none" stroke="#e8101e" strokeWidth="2.5" />
      </svg>
    </div>
  );
}
